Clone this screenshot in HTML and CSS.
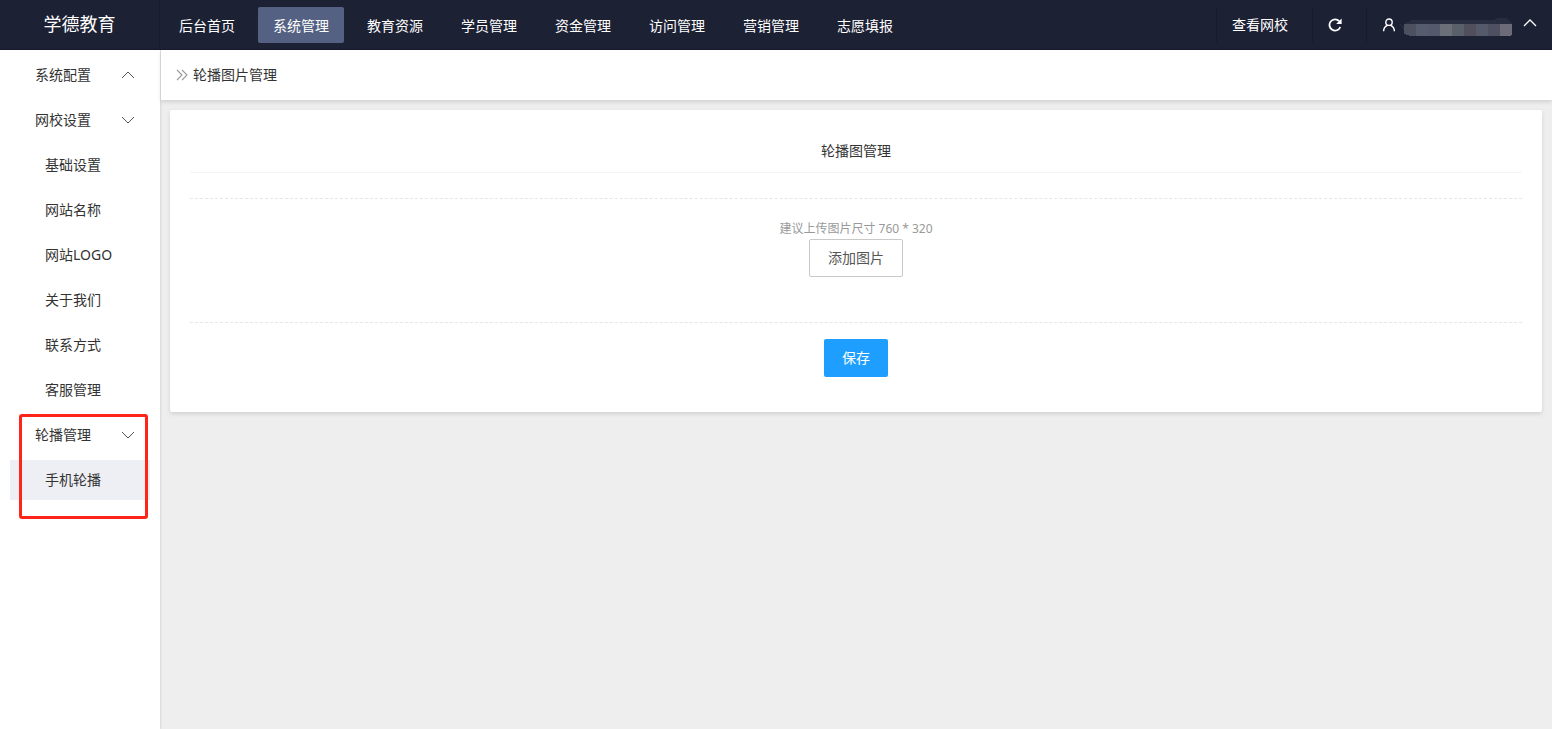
FILE: index.html
```html
<!DOCTYPE html>
<html lang="zh-CN">
<head>
<meta charset="utf-8">
<title>轮播图片管理</title>
<link rel="stylesheet" href="styles.css">
</head>
<body>
<header class="header">
  <div class="brand">学德教育</div>
  <nav class="nav">
    <a href="#">后台首页</a>
    <a href="#" class="active">系统管理</a>
    <a href="#">教育资源</a>
    <a href="#">学员管理</a>
    <a href="#">资金管理</a>
    <a href="#">访问管理</a>
    <a href="#">营销管理</a>
    <a href="#">志愿填报</a>
  </nav>
  <div class="tools">
    <a href="#" class="tool">查看网校</a>
    <button type="button" class="tool" aria-label="刷新">
      <svg width="14" height="14" viewBox="0 0 14 14" fill="none"><path d="M12.3 9A5.6 5.6 0 1 1 11.2 3.2" stroke="#fff" stroke-width="1.8"/><path d="M13.6 .6v5.4H8.2z" fill="#fff"/></svg>
    </button>
    <button type="button" class="tool user" aria-label="用户">
      <svg width="14" height="14" viewBox="0 0 14 14" fill="none" stroke="#fff" stroke-width="1.4"><circle cx="7" cy="4.2" r="3.2"/><path d="M1.6 13.2c.1-3.6 1.8-5 3.7-5.9M12.4 13.2c-.1-3.6-1.8-5-3.7-5.9"/></svg>
      <svg class="mask" width="112" height="18" viewBox="0 0 112 18" shape-rendering="crispEdges">
        <path d="M0 6l4 4v3M4 6l8-4h82l4-2h8l6 6H4z" fill="#282d3f"/>
        <path d="M4 6h12v12h-6l-6-2z" fill="#4d505e"/><path d="M16 6h12v12H16z" fill="#565c6d"/><path d="M28 6h12v12H28z" fill="#535a6c"/><path d="M40 6h12v12H40z" fill="#6b6f78"/><path d="M52 6h12v12H52z" fill="#5a606a"/><path d="M64 6h12v12H64z" fill="#524f5d"/><path d="M76 6h12v12H76z" fill="#555a6b"/><path d="M88 6h12v12H88z" fill="#4e4f60"/><path d="M100 6h12v10l-2 2h-10z" fill="#6c6b77"/>
      </svg>
      <svg class="caret" width="14" height="8" viewBox="0 0 14 8" fill="none" stroke="#fff" stroke-width="1.3"><path d="M1 7l6-6 6 6"/></svg>
    </button>
  </div>
</header>
<div class="body">
  <aside class="sidebar">
    <a href="#" class="row">系统配置<svg width="14" height="8" viewBox="0 0 14 8"><path d="M1 7l6-6 6 6"/></svg></a>
    <a href="#" class="row">网校设置<svg width="14" height="8" viewBox="0 0 14 8"><path d="M1 1l6 6 6-6"/></svg></a>
    <a href="#" class="row sub">基础设置</a>
    <a href="#" class="row sub">网站名称</a>
    <a href="#" class="row sub">网站LOGO</a>
    <a href="#" class="row sub">关于我们</a>
    <a href="#" class="row sub">联系方式</a>
    <a href="#" class="row sub">客服管理</a>
    <div class="group">
      <a href="#" class="row">轮播管理<svg width="14" height="8" viewBox="0 0 14 8"><path d="M1 1l6 6 6-6"/></svg></a>
      <a href="#" class="row sub current">手机轮播</a>
    </div>
  </aside>
  <main class="main">
    <div class="crumb">
      <svg width="12" height="12" viewBox="0 0 12 12" fill="none" stroke="#999" stroke-width="1.1"><path d="M1 1l5 5-5 5M6 1l5 5-5 5"/></svg>
      轮播图片管理
    </div>
    <section class="card">
      <h1 class="title">轮播图管理</h1>
      <div class="upload">
        <p class="hint">建议上传图片尺寸 760 * 320</p>
        <button type="button" class="btn">添加图片</button>
      </div>
      <div class="actions"><button type="button" class="btn primary">保存</button></div>
    </section>
  </main>
</div>
</body>
</html>
```
FILE: styles.css
```css
* { box-sizing: border-box; }
body {
  margin: 0;
  min-height: 100vh;
  display: flex;
  flex-direction: column;
  background: #eee;
  color: #333;
  font: 14px/24px "Noto Sans", "Noto Sans CJK SC", sans-serif;
}
a { color: inherit; text-decoration: none; }
button { font: inherit; cursor: pointer; }

.header {
  display: flex;
  height: 50px;
  background: #1d2134;
  border-bottom: 1px solid #171a2b;
  color: #fff;
}
.brand {
  width: 160px;
  border-right: 1px solid #191c2c;
  font-size: 18px;
  line-height: 48px;
  text-align: center;
}
.nav { display: flex; align-items: center; padding-top: 1px; }
.nav a {
  height: 36px;
  margin: 0 4px;
  padding: 0 15px;
  border-radius: 2px;
  line-height: 38px;
}
.nav .active { background: #546182; }
.tools { display: flex; align-items: center; margin-left: auto; padding-top: 1px; }
.tool {
  display: flex;
  align-items: center;
  height: 34px;
  padding: 0 24px 0 15px;
  border: 0;
  border-left: 1px solid #171a2b;
  background: none;
  color: #fff;
}
.user { padding-right: 15px; }
.mask { margin: 4px 11px 0 4px; }
.caret { margin-bottom: 4px; }

.body { display: flex; flex: 1; }
.sidebar {
  width: 160px;
  padding: 5px 10px;
  background: #fff;
  box-shadow: 1px 0 2px #0000001a;
}
.row {
  display: flex;
  align-items: center;
  justify-content: space-between;
  height: 40px;
  margin-bottom: 5px;
  padding: 0 15px 0 25px;
}
.row svg { fill: none; stroke: #555; }
.sub { padding-left: 35px; }
.current { background: #eeeff4; }
.group { position: relative; }
.group::after {
  content: "";
  position: absolute;
  inset: -1px 2px -19px 9px;
  border: 3px solid #ff2419;
  border-radius: 3px;
  pointer-events: none;
}

.main { flex: 1; padding-left: 1px; }
.crumb {
  display: flex;
  align-items: center;
  gap: 5px;
  height: 50px;
  padding-left: 15px;
  background: #fff;
  box-shadow: 0 2px 4px #0000001f;
}
.card {
  margin: 10px 10px 10px 9px;
  padding: 20px 20px 35px;
  background: #fff;
  border-radius: 2px;
  box-shadow: 0 2px 4px #0000001f;
  text-align: center;
}
.title {
  margin: 0 0 25px;
  border-bottom: 1px solid #f4f4f4;
  font-size: 14px;
  font-weight: 400;
  line-height: 42px;
}
.upload {
  height: 125px;
  padding-top: 20px;
  border: 1px dashed #e6e6e6;
  border-width: 1px 0;
}
.hint { margin: 0; color: #999; font-size: 12px; line-height: 20px; }
.btn {
  height: 38px;
  padding: 0 18px;
  border: 1px solid #c9c9c9;
  border-radius: 2px;
  background: #fff;
  color: #555;
}
.actions { display: flex; justify-content: center; padding-top: 16px; }
.primary { border: 0; background: #1e9fff; color: #fff; }
```
